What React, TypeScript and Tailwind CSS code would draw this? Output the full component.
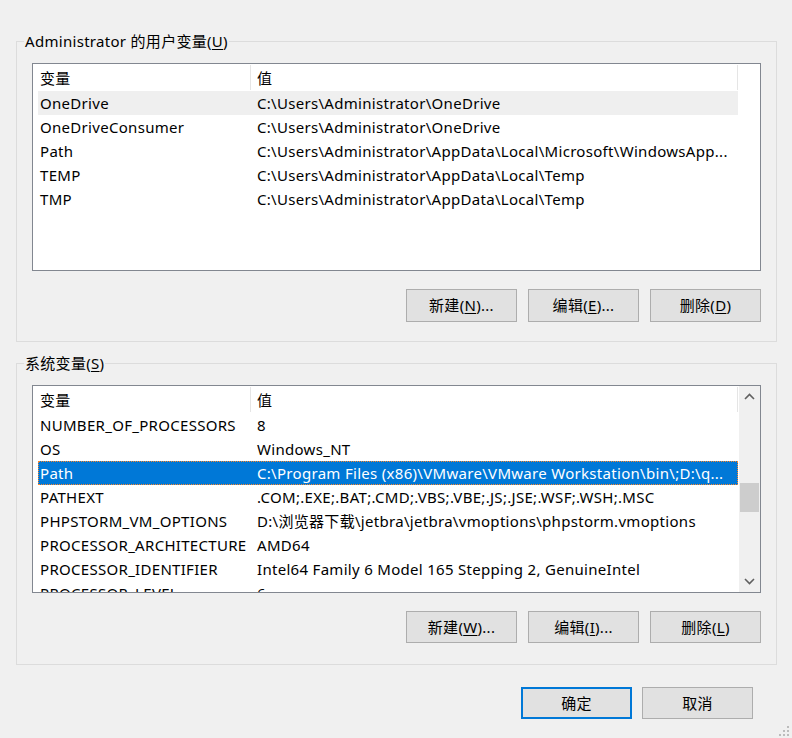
import type { ReactNode } from "react";

type Row = { name: string; value: string; state?: "hover" | "selected" };

const userVars: Row[] = [
  { name: "OneDrive", value: "C:\\Users\\Administrator\\OneDrive", state: "hover" },
  { name: "OneDriveConsumer", value: "C:\\Users\\Administrator\\OneDrive" },
  { name: "Path", value: "C:\\Users\\Administrator\\AppData\\Local\\Microsoft\\WindowsApp..." },
  { name: "TEMP", value: "C:\\Users\\Administrator\\AppData\\Local\\Temp" },
  { name: "TMP", value: "C:\\Users\\Administrator\\AppData\\Local\\Temp" },
];

const systemVars: Row[] = [
  { name: "NUMBER_OF_PROCESSORS", value: "8" },
  { name: "OS", value: "Windows_NT" },
  { name: "Path", value: "C:\\Program Files (x86)\\VMware\\VMware Workstation\\bin\\;D:\\q...", state: "selected" },
  { name: "PATHEXT", value: ".COM;.EXE;.BAT;.CMD;.VBS;.VBE;.JS;.JSE;.WSF;.WSH;.MSC" },
  { name: "PHPSTORM_VM_OPTIONS", value: "D:\\浏览器下载\\jetbra\\jetbra\\vmoptions\\phpstorm.vmoptions" },
  { name: "PROCESSOR_ARCHITECTURE", value: "AMD64" },
  { name: "PROCESSOR_IDENTIFIER", value: "Intel64 Family 6 Model 165 Stepping 2, GenuineIntel" },
  { name: "PROCESSOR_LEVEL", value: "6" },
];

const Key = ({ k }: { k: string }) => <span className="underline underline-offset-2">{k}</span>;

const Button = ({ children, primary, tall }: { children: ReactNode; primary?: boolean; tall?: boolean }) => (
  <button
    className={
      "flex w-[111px] items-center justify-center bg-[#e1e1e1] text-[15px] tracking-[0.3px] text-black " +
      (tall ? "h-[33px] " : "h-[32px] ") +
      (primary ? "border-2 border-[#0078d7]" : "border border-[#adadad]")
    }
  >
    {children}
  </button>
);

const VarRows = ({ rows }: { rows: Row[] }) => (
  <div className="w-[706px] shrink-0 pl-[5px]">
    <div className="flex h-[27px] w-[700px] items-center">
      <div className="w-[212px] pl-[2px] pt-[2px]">变量</div>
      <div className="h-[25px] w-[488px] border-x border-[#e5e5e5] pl-[6px] pt-[1px] leading-[25px]">值</div>
    </div>
    {rows.map((r) => (
      <div
        key={r.name}
        className={
          "flex h-[24px] w-[700px] items-center whitespace-nowrap " +
          (r.state === "selected"
            ? "bg-[#0078d7] text-white outline-1 -outline-offset-1 outline-dotted outline-[#ff8728]"
            : r.state === "hover"
              ? "bg-[#efefef]"
              : "")
        }
      >
        <div className="w-[212px] overflow-hidden pl-[2px]">{r.name}</div>
        <div className="w-[488px] overflow-hidden pl-[7px]">{r.value}</div>
      </div>
    ))}
  </div>
);

const Chevron = ({ up }: { up?: boolean }) => (
  <svg width="11" height="7" viewBox="0 0 11 7">
    <polyline
      points={up ? "1,6 5.5,1.5 10,6" : "1,1 5.5,5.5 10,1"}
      fill="none"
      stroke="#606060"
      strokeWidth="1.6"
    />
  </svg>
);

const Group = ({ label, children }: { label: ReactNode; children: ReactNode }) => (
  <fieldset className="w-[761px] border border-[#dcdcdc]">
    <legend className="ml-[7px] px-[1px] text-[15px] leading-[21px]">{label}</legend>
    <div className="px-[15px]">{children}</div>
  </fieldset>
);

export default function App() {
  return (
    <div className="relative h-[738px] w-[792px] overflow-hidden bg-[#f0f0f0] pl-[16px] pt-[31px] font-['Noto_Sans','Noto_Sans_CJK_SC',sans-serif] text-[15px] tracking-[0.3px] text-black">
      <Group
        label={
          <>
            Administrator 的用户变量(<Key k="U" />)
          </>
        }
      >
        <div className="mt-[11px] h-[208px] border border-[#828790] bg-white">
          <VarRows rows={userVars} />
        </div>
        <div className="mb-[19px] mt-[18px] flex justify-end gap-[11px]">
          <Button tall>
            新建(<Key k="N" />)...
          </Button>
          <Button tall>
            编辑(<Key k="E" />)...
          </Button>
          <Button tall>
            删除(<Key k="D" />)
          </Button>
        </div>
      </Group>

      <div className="mt-[11px]">
        <Group
          label={
            <>
              系统变量(<Key k="S" />)
            </>
          }
        >
          <div className="mt-[11px] flex h-[208px] overflow-hidden border border-[#828790] bg-white">
            <VarRows rows={systemVars} />
            <div className="flex w-[21px] flex-col bg-[#f0f0f0]">
              <div className="flex h-[21px] items-center justify-center">
                <Chevron up />
              </div>
              <div className="flex-1">
                <div className="ml-[1px] mt-[76px] h-[29px] w-[19px] bg-[#cdcdcd]" />
              </div>
              <div className="flex h-[21px] items-center justify-center">
                <Chevron />
              </div>
            </div>
          </div>
          <div className="mb-[21px] mt-[18px] flex justify-end gap-[11px]">
            <Button>
              新建(<Key k="W" />)...
            </Button>
            <Button>
              编辑(<Key k="I" />)...
            </Button>
            <Button>
              删除(<Key k="L" />)
            </Button>
          </div>
        </Group>
      </div>

      <div className="mr-[24px] mt-[22px] flex w-[737px] justify-end gap-[10px]">
        <Button primary>确定</Button>
        <Button>取消</Button>
      </div>

      <svg className="absolute bottom-[1px] right-[2px]" width="12" height="12" viewBox="0 0 12 12">
        <g fill="#bcbcbc">
          <rect x="9" y="1" width="2" height="2" />
          <rect x="5" y="5" width="2" height="2" />
          <rect x="9" y="5" width="2" height="2" />
          <rect x="1" y="9" width="2" height="2" />
          <rect x="5" y="9" width="2" height="2" />
          <rect x="9" y="9" width="2" height="2" />
        </g>
      </svg>
    </div>
  );
}
